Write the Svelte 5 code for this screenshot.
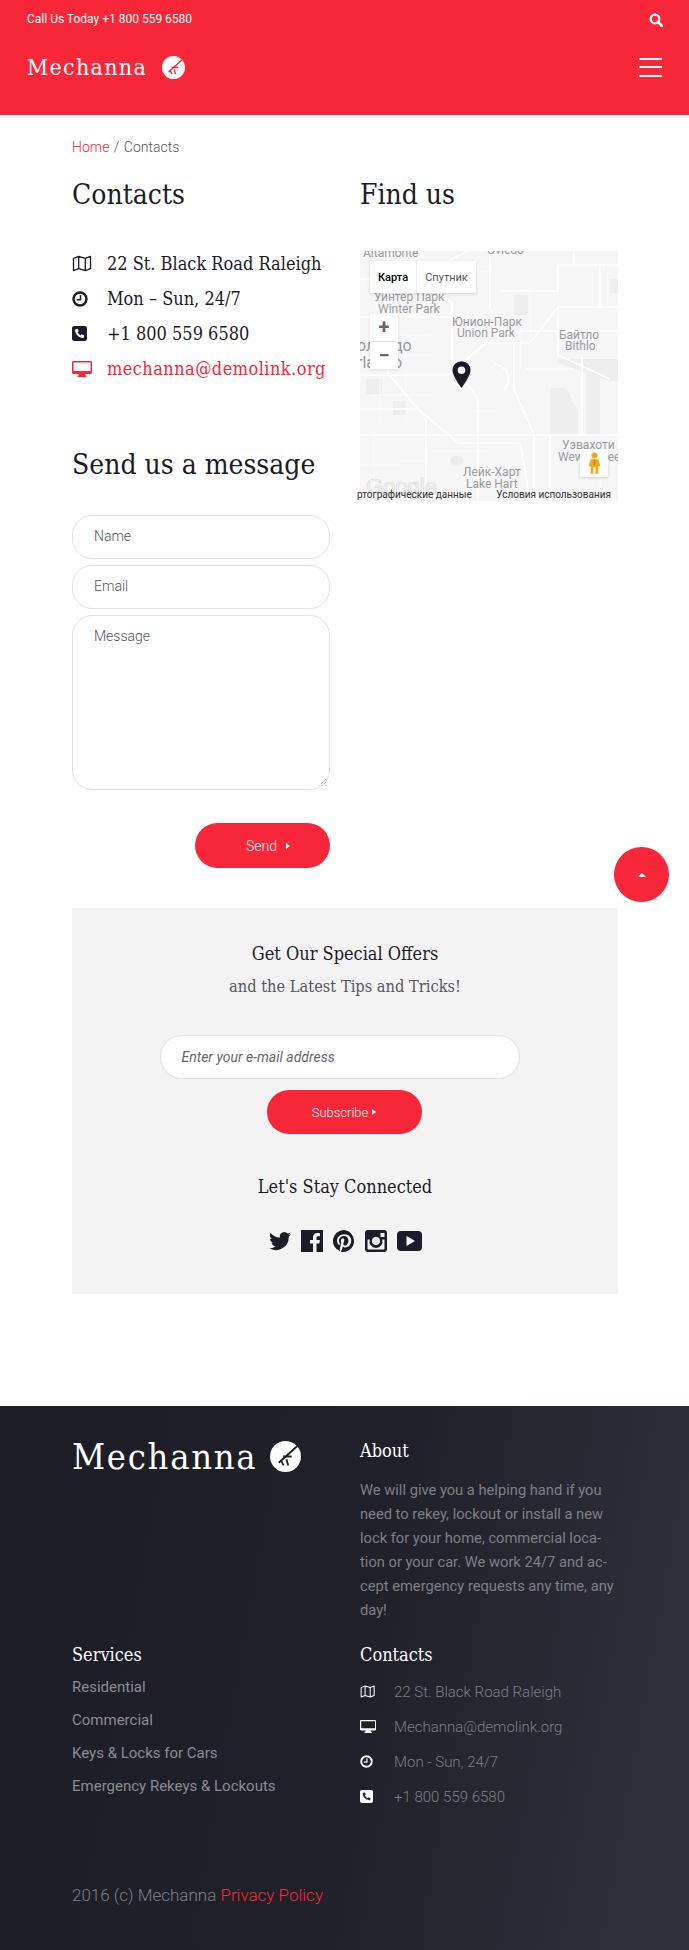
<script>
  const contacts = [
    { icon: 'map', text: '22 St. Black Road Raleigh' },
    { icon: 'clock', text: 'Mon – Sun, 24/7' },
    { icon: 'phone', text: '+1 800 559 6580' },
    { icon: 'monitor', text: 'mechanna@demolink.org', link: true },
  ];
  const services = ['Residential', 'Commercial', 'Keys & Locks for Cars', 'Emergency Rekeys & Lockouts'];
  const footerContacts = [
    { icon: 'map', text: '22 St. Black Road Raleigh' },
    { icon: 'monitor', text: 'Mechanna@demolink.org' },
    { icon: 'clock', text: 'Mon - Sun, 24/7' },
    { icon: 'phone', text: '+1 800 559 6580' },
  ];
  const mapLabels = [
    { x: 3, y: 6, t: 'Altamonte', s: 12 },
    { x: 127, y: 3, t: 'Oviedo', s: 12 },
    { x: 14, y: 50, t: 'Уинтер Парк', s: 12 },
    { x: 18, y: 62, t: 'Winter Park', s: 12 },
    { x: 92, y: 75, t: 'Юнион-Парк', s: 12 },
    { x: 97, y: 86, t: 'Union Park', s: 12 },
    { x: 199, y: 88, t: 'Байтло', s: 12 },
    { x: 205, y: 99, t: 'Bithlo', s: 12 },
    { x: -3, y: 100, t: 'олендо', s: 16 },
    { x: -3, y: 117, t: 'rlando', s: 16 },
    { x: 202, y: 198, t: 'Уэвахоти', s: 12 },
    { x: 198, y: 210, t: 'Wewahotee', s: 12 },
    { x: 103, y: 225, t: 'Лейк-Харт', s: 12 },
    { x: 106, y: 237, t: 'Lake Hart', s: 12 },
  ];
  const roads = [
    'M0 28H62L92 52V112L118 148V250',
    'M0 66H120L138 80H258',
    'M28 0V122L66 168V250',
    'M0 124H88L126 92H170L198 56H258',
    'M0 184H258',
    'M130 0V58L154 88V138L174 184V250',
    'M52 28L108 0',
    'M140 40H198V14H258',
    'M0 158H58L98 192H160L170 250',
    'M198 56V104L250 128',
    'M222 106V184',
    'M134 112C150 118 152 128 144 140',
    'M166 118H214',
    'M190 184V250',
    'M214 0V14M240 14V56',
  ];
  const streets = [
    'M10 84H70M10 104H70M10 144H70M20 84V172M46 84V172',
    'M100 20H130M160 70V120M170 40V88M70 200H130M40 210H66M110 160H140',
    'M0 214H40M14 184V250M220 214H258M240 184V250',
  ];
  const blocks = [
    'M198 108H258V130H250L198 112Z',
    'M190 137H206L218 160V184H190Z',
    'M154 44H168V64H154Z',
    'M33 150H47V164H33Z',
    'M6 128H22V144H6Z',
    'M250 28H258V42H250Z',
    'M226 108H240V184H226Z',
  ];
</script>

{#snippet glyph(name)}
  {#if name === 'map'}
    <svg viewBox="0 0 20 18" width="20" height="17"><path d="M1 3.500 6.500 1.500 13.500 3.500 19 1.500V14.500L13.500 16.500 6.500 14.500 1 16.500ZM6.500 1.500V14.500M13.500 3.500V16.500" fill="none" stroke="currentColor" stroke-width="1.400" stroke-linejoin="round"/></svg>
  {:else if name === 'clock'}
    <svg viewBox="0 0 16 16" width="16" height="16"><circle cx="8" cy="8" r="6.500" fill="none" stroke="currentColor" stroke-width="2.400"/><path d="M8.500 4V8.800H4.800" fill="none" stroke="currentColor" stroke-width="1.500"/></svg>
  {:else if name === 'phone'}
    <svg viewBox="0 0 16 16" width="15" height="15"><rect width="16" height="16" rx="2.500" fill="currentColor"/><path class="cut" d="M4 3.400 6 3l1.200 2.700-1.200 1c.6 1.400 1.700 2.500 3.200 3.300l1-1.200L13 10l-.4 2c-.1.500-.5.800-1 .7C7.200 12.400 3.600 8.800 3.300 4.400c0-.5.200-.9.700-1Z"/></svg>
  {:else}
    <svg viewBox="0 0 20 16" width="20" height="16"><path fill-rule="evenodd" d="M0 1.500C0 .7.700 0 1.500 0h17C19.300 0 20 .7 20 1.500V11.500c0 .8-.7 1.500-1.500 1.500H13l.5 1.500h1V16h-9v-1.500h1L7 13H1.500C.7 13 0 12.300 0 11.500ZM1.500 1.500V10h17V1.500Z" fill="currentColor"/></svg>
  {/if}
{/snippet}

{#snippet logoMark(size)}
  <svg class="mark" viewBox="0 0 32 32" width={size} height={size}>
    <circle cx="16" cy="16" r="16" fill="#fff"/>
    <path class="rake" d="M28.800 4.600 9 22.400M13.500 16H22.400M17 18.800 18.800 25.200M11.700 20.600 13.900 25.200" fill="none" stroke-width="1.900"/>
  </svg>
{/snippet}

<div class="page">
  <header class="header">
    <div class="topbar">
      <span>Call Us Today +1 800 559 6580</span>
      <svg viewBox="0 0 14 14" width="14" height="14"><circle cx="6" cy="6" r="4.300" fill="none" stroke="#fff" stroke-width="2.300"/><path d="M9 9 13 13" stroke="#fff" stroke-width="2.600" stroke-linecap="round"/></svg>
    </div>
    <div class="brandbar">
      <div class="brand">
        <span class="brand-name">Mechanna</span>
        {@render logoMark(23)}
      </div>
      <div class="burger"><i></i><i></i><i></i></div>
    </div>
  </header>

  <main class="main">
    <div class="crumbs"><span class="red">Home</span> / Contacts</div>

    <div class="cols">
      <div class="col">
        <h2>Contacts</h2>
        <ul class="contact-list">
          {#each contacts as c}
            <li class:red={c.link}>
              <span class="ico">{@render glyph(c.icon)}</span>
              {c.text}
            </li>
          {/each}
        </ul>

        <h2 class="send-title">Send us a message</h2>
        <form class="form">
          <div class="field">Name</div>
          <div class="field">Email</div>
          <div class="field area">
            Message
            <svg class="grip" viewBox="0 0 9 9" width="9" height="9"><path d="M8 1 1 8M8 4 4 8M8 7 7 8" stroke="#999" stroke-dasharray="1 1"/></svg>
          </div>
          <div class="send-row">
            <div class="btn send">Send <b class="arrow"></b></div>
          </div>
        </form>
      </div>

      <div class="col">
        <h2>Find us</h2>
        <div class="map">
          <svg class="map-art" viewBox="0 0 258 250" width="258" height="250">
            <rect width="258" height="250" fill="#f6f6f6"/>
            {#each blocks as b}<path d={b} fill="#eeeeee"/>{/each}
            {#each streets as r}<path d={r} fill="none" stroke="#fbfbfb" stroke-width="1"/>{/each}
            {#each roads as r}<path d={r} fill="none" stroke="#fff" stroke-width="1.600"/>{/each}
            <ellipse cx="97" cy="210" rx="7" ry="5" fill="#ececec"/>
            {#each mapLabels as l}
              <text x={l.x} y={l.y} font-size={l.s}>{l.t}</text>
            {/each}
            <text class="google" x="6" y="243">Google</text>
          </svg>
          <div class="map-tabs"><span class="on">Карта</span><span>Спутник</span></div>
          <div class="zoom"><span>+</span><span class="minus">−</span></div>
          <svg class="pin" viewBox="0 0 20 28" width="19" height="27"><path fill-rule="evenodd" d="M10 0a9.500 9.500 0 0 0-9.500 9.500C.5 15 7 24 10 28c3-4 9.500-13 9.500-18.500A9.500 9.500 0 0 0 10 0Zm0 5.500a4 4 0 1 1 0 8 4 4 0 0 1 0-8Z" fill="#1b1c25"/></svg>
          <div class="pegman">
            <svg viewBox="0 0 12 20" width="13" height="22"><circle cx="6" cy="3" r="2.800" fill="#f3a81c"/><path d="M2.500 6.500h7L11.500 13H9.500V20H7V14H5V20H2.500V13H.5Z" fill="#f3a81c"/><path d="M6 6.500V12" stroke="#c97f0a" stroke-width="1.500"/></svg>
          </div>
          <div class="attrib"><span>ртографические данные</span><span>Условия использования</span></div>
        </div>
      </div>
    </div>

    <section class="offers">
      <h3 class="offer-title">Get Our Special Offers</h3>
      <p class="offer-sub">and the Latest Tips and Tricks!</p>
      <div class="sub-input">Enter your e-mail address</div>
      <div class="btn subscribe">Subscribe <b class="arrow"></b></div>
      <h3 class="stay">Let's Stay Connected</h3>
      <div class="social">
        <svg viewBox="0 0 24 24" width="22" height="22"><path d="M24 4.600c-.9.400-1.800.7-2.800.8 1-.6 1.800-1.600 2.200-2.700-1 .6-2 1-3.100 1.200A4.900 4.900 0 0 0 11.900 8.400C7.800 8.200 4.200 6.300 1.700 3.300c-1.300 2.200-.7 5.100 1.500 6.600-.8 0-1.600-.2-2.200-.6 0 2.300 1.600 4.400 3.900 4.900-.7.200-1.500.2-2.200.1.600 2 2.400 3.400 4.600 3.400A9.900 9.900 0 0 1 0 19.700 14 14 0 0 0 21.500 7.300c1-.7 1.800-1.600 2.500-2.700Z" fill="#1b1c25"/></svg>
        <svg viewBox="0 0 22 22" width="22" height="22"><path fill-rule="evenodd" d="M0 0H22V22H15.500V13.500H18.400L18.900 10H15.500V8C15.500 7 15.800 6.300 17.200 6.300H19V3.200C18.600 3.100 17.600 3 16.400 3 13.800 3 12 4.600 12 7.500V10H9V13.500H12V22H0Z" fill="#1b1c25"/></svg>
        <svg viewBox="0 0 24 24" width="22" height="22"><path fill-rule="evenodd" d="M12 0a12 12 0 0 0-4.400 23.200c-.1-.9-.2-2.400 0-3.400l1.400-6s-.4-.7-.4-1.800c0-1.700 1-2.900 2.200-2.900 1 0 1.500.8 1.500 1.700 0 1-.7 2.600-1 4-.3 1.200.6 2.200 1.800 2.200 2.100 0 3.800-2.300 3.800-5.500 0-2.900-2.100-4.900-5-4.900-3.400 0-5.400 2.600-5.400 5.200 0 1 .4 2.100.9 2.700l.1.400-.3 1.400c-.1.200-.2.300-.4.200-1.500-.7-2.400-2.900-2.400-4.700 0-3.800 2.800-7.300 8-7.300 4.200 0 7.500 3 7.500 7 0 4.200-2.600 7.500-6.300 7.500-1.200 0-2.400-.6-2.800-1.400l-.8 2.900c-.3 1-1 2.400-1.500 3.200A12 12 0 1 0 12 0Z" fill="#1b1c25"/></svg>
        <svg viewBox="0 0 22 22" width="22" height="22"><path fill-rule="evenodd" d="M3 0H19A3 3 0 0 1 22 3V19A3 3 0 0 1 19 22H3A3 3 0 0 1 0 19V3A3 3 0 0 1 3 0ZM15.500 3V7H19.500V3ZM2.500 9.500V18.500A1 1 0 0 0 3.500 19.500H18.500A1 1 0 0 0 19.500 18.500V9.500H17.200A6.500 6.500 0 1 1 4.800 9.500ZM11 7A4 4 0 1 0 11 15 4 4 0 0 0 11 7Z" fill="#1b1c25"/></svg>
        <svg viewBox="0 0 25 20" width="25" height="20"><path fill-rule="evenodd" d="M4 0H21A4 4 0 0 1 25 4V16A4 4 0 0 1 21 20H4A4 4 0 0 1 0 16V4A4 4 0 0 1 4 0ZM9.500 5V15L18 10Z" fill="#1b1c25"/></svg>
      </div>
    </section>
  </main>

  <footer class="footer">
    <div class="foot-grid">
      <div class="foot-brand">
        <span class="foot-name">Mechanna</span>
        {@render logoMark(31)}
      </div>
      <div>
        <h4>About</h4>
        <p class="about">We will give you a helping hand if you need to rekey, lockout or install a new lock for your home, commercial loca&shy;tion or your car. We work 24/7 and ac&shy;cept emergency requests any time, any day!</p>
      </div>
      <div>
        <h4>Services</h4>
        <ul class="svc">
          {#each services as s}<li>{s}</li>{/each}
        </ul>
      </div>
      <div>
        <h4>Contacts</h4>
        <ul class="foot-contacts">
          {#each footerContacts as c}
            <li><span class="ico small">{@render glyph(c.icon)}</span>{c.text}</li>
          {/each}
        </ul>
      </div>
    </div>
    <div class="copy">2016 (c) Mechanna <span class="red">Privacy Policy</span></div>
  </footer>

  <div class="to-top"><b></b></div>
</div>

<style>
  :global(body) {
    margin: 0;
    background: #fff;
  }

  .page {
    position: relative;
    width: 689px;
    height: 1950px;
    overflow: hidden;
    font-family: Roboto, "Liberation Sans", sans-serif;
    color: #1b1c25;
  }

  ul {
    list-style: none;
    margin: 0;
    padding: 0;
  }

  h2, h3, h4, p {
    margin: 0;
    font-weight: 400;
  }

  h2, h3, h4, .brand-name, .foot-name, .contact-list {
    font-family: "DejaVu Serif", "Liberation Serif", serif;
    font-stretch: condensed;
  }

  .red {
    color: #f72638;
  }

  .header {
    height: 115px;
    background: #f72638;
    color: #fff;
    padding: 0 27px;
    box-sizing: border-box;
  }

  .topbar {
    display: flex;
    justify-content: space-between;
    align-items: center;
    height: 38px;
    font-size: 12px;
  }

  .topbar svg {
    margin-right: -1px;
    margin-top: 2px;
  }

  .brandbar {
    display: flex;
    justify-content: space-between;
    align-items: center;
    height: 54px;
    margin-top: 2px;
  }

  .brand {
    display: flex;
    align-items: center;
    gap: 15px;
  }

  .brand-name {
    font-size: 23px;
    letter-spacing: 1.300px;
  }

  .mark {
    display: block;
  }

  .rake {
    stroke: #f72638;
  }

  .foot-brand .rake {
    stroke: #1e1f28;
  }

  .burger {
    display: flex;
    flex-direction: column;
    gap: 6.500px;
    width: 23px;
  }

  .burger i {
    display: block;
    height: 2px;
    background: #fff;
  }

  .main {
    padding: 0 71px 0 72px;
    height: 1291px;
  }

  .crumbs {
    padding-top: 24px;
    height: 22px;
    font-size: 14px;
    font-weight: 300;
    color: #55565e;
    word-spacing: 1px;
  }

  .cols {
    display: grid;
    grid-template-columns: 258px 258px;
    column-gap: 30px;
    margin-top: 16px;
    height: 731px;
  }

  h2 {
    font-size: 28px;
    line-height: 36px;
  }

  .contact-list {
    margin-top: 33px;
    font-size: 18px;
  }

  .contact-list li {
    display: flex;
    align-items: center;
    height: 35px;
    white-space: nowrap;
  }

  .contact-list li.red {
    letter-spacing: .45px;
  }

  .ico {
    display: flex;
    width: 35px;
    flex: none;
  }

  .send-title {
    margin-top: 61px;
  }

  .form {
    margin-top: 32px;
    display: flex;
    flex-direction: column;
    gap: 6px;
  }

  .field {
    position: relative;
    height: 44px;
    box-sizing: border-box;
    border: 1px solid #e2e2e2;
    border-radius: 20px;
    padding: 0 21px;
    line-height: 41px;
    font-size: 14px;
    font-weight: 300;
    color: #55565e;
  }

  .area {
    height: 175px;
  }

  .grip {
    position: absolute;
    right: 2px;
    bottom: 2px;
  }

  .send-row {
    display: flex;
    justify-content: flex-end;
    margin-top: 27px;
  }

  .btn {
    display: flex;
    align-items: center;
    justify-content: center;
    background: #f72638;
    color: #fff;
    font-size: 13px;
    font-weight: 300;
  }

  .send {
    width: 135px;
    height: 45px;
    border-radius: 23px;
    box-sizing: border-box;
    padding-left: 11px;
    gap: 9px;
    font-size: 14px;
  }

  .arrow {
    width: 0;
    height: 0;
    border-left: 4px solid #fff;
    border-top: 3px solid transparent;
    border-bottom: 3px solid transparent;
  }

  .map {
    position: relative;
    width: 258px;
    height: 250px;
    margin-top: 38px;
    font-family: Roboto, sans-serif;
  }

  .map-art {
    display: block;
    overflow: hidden;
  }

  .map-art text {
    fill: #9a9a9e;
    font-family: Roboto, sans-serif;
  }

  .map-art .google {
    fill: #f8f8f8;
    stroke: #d4d4d4;
    stroke-width: .6px;
    font-size: 22px;
    font-family: "Liberation Sans", sans-serif;
  }

  .map-tabs {
    position: absolute;
    left: 10px;
    top: 10px;
    display: flex;
    height: 32px;
    background: #fff;
    font-size: 11px;
    color: #565656;
    box-shadow: 0 1px 3px rgba(0, 0, 0, .15);
  }

  .map-tabs span {
    display: flex;
    align-items: center;
    padding: 0 8px;
  }

  .map-tabs .on {
    color: #000;
    font-weight: 500;
    border-right: 1px solid #eee;
  }

  .zoom {
    position: absolute;
    left: 10px;
    top: 63px;
    width: 28px;
    height: 55px;
    background: #fff;
    display: flex;
    flex-direction: column;
    color: #666;
    font-size: 20px;
    font-weight: 700;
    text-align: center;
    box-shadow: 0 1px 3px rgba(0, 0, 0, .1);
  }

  .zoom span {
    height: 27px;
    line-height: 27px;
  }

  .minus {
    border-top: 1px solid #e6e6e6;
  }

  .pin {
    position: absolute;
    left: 92px;
    top: 110px;
  }

  .pegman {
    position: absolute;
    right: 10px;
    top: 198px;
    width: 28px;
    height: 28px;
    background: #fff;
    display: flex;
    align-items: center;
    justify-content: center;
    box-shadow: 0 1px 3px rgba(0, 0, 0, .15);
  }

  .attrib {
    position: absolute;
    left: -3px;
    right: 7px;
    bottom: 0;
    display: flex;
    justify-content: space-between;
    font-size: 10px;
    line-height: 13px;
    white-space: nowrap;
    color: #333;
  }

  .offers {
    height: 386px;
    width: 546px;
    box-sizing: border-box;
    background: #f3f3f3;
    display: flex;
    flex-direction: column;
    align-items: center;
    padding-top: 34px;
  }

  .offer-title {
    font-size: 18px;
    line-height: 24px;
  }

  .offer-sub {
    margin-top: 10px;
    font-family: "DejaVu Serif", serif;
    font-stretch: condensed;
    font-size: 16.300px;
    line-height: 22px;
    color: #55565e;
  }

  .sub-input {
    margin-top: 37px;
    margin-right: 11px;
    width: 360px;
    height: 44px;
    box-sizing: border-box;
    background: #fff;
    border: 1px solid #e2e2e2;
    border-radius: 22px;
    padding-left: 21px;
    line-height: 42px;
    font-size: 14px;
    font-style: italic;
    color: #66676d;
  }

  .subscribe {
    margin-top: 11px;
    margin-right: 2px;
    width: 155px;
    height: 44px;
    border-radius: 22px;
    gap: 4px;
  }

  .stay {
    margin-top: 41px;
    font-size: 18px;
    line-height: 24px;
  }

  .social {
    margin-top: 31px;
    display: flex;
    align-items: center;
    gap: 10px;
  }

  .footer {
    height: 544px;
    box-sizing: border-box;
    background: linear-gradient(100deg, #1c1d25 0%, #1f2028 50%, #30313a 100%);
    padding: 33px 71px 0 72px;
    color: #7e7f84;
    font-weight: 300;
    position: relative;
  }

  .foot-grid {
    display: grid;
    grid-template-columns: 258px 258px;
    column-gap: 30px;
    grid-template-rows: 204px auto;
  }

  .foot-brand {
    display: flex;
    align-items: center;
    gap: 13px;
    height: 35px;
    color: #fff;
  }

  .foot-name {
    font-size: 36px;
    letter-spacing: 1.700px;
  }

  h4 {
    font-size: 18px;
    line-height: 24px;
    color: #fff;
  }

  .about {
    margin-top: 14.600px;
    font-size: 14.700px;
    line-height: 24px;
    hyphens: manual;
  }

  .svc {
    margin-top: 4px;
    font-size: 15px;
    color: #8b8c90;
  }

  .svc li {
    height: 33px;
    line-height: 33px;
    font-weight: 400;
  }

  .foot-contacts {
    margin-top: 7px;
    font-size: 15px;
  }

  .foot-contacts li {
    display: flex;
    align-items: center;
    height: 35px;
  }

  .ico.small {
    width: 34px;
    color: #fff;
  }

  .ico.small svg {
    width: auto;
    height: 13px;
  }

  .ico.small :global(.cut) {
    fill: #23242c;
  }

  .ico :global(.cut) {
    fill: #fff;
  }

  .copy {
    position: absolute;
    left: 72px;
    top: 479px;
    font-size: 17px;
  }

  .to-top {
    position: absolute;
    left: 614px;
    top: 847px;
    width: 55px;
    height: 55px;
    border-radius: 50%;
    background: #f72638;
    display: flex;
    align-items: center;
    justify-content: center;
  }

  .to-top b {
    width: 0;
    height: 0;
    border-bottom: 4px solid #fff;
    border-left: 4px solid transparent;
    border-right: 4px solid transparent;
  }
</style>
